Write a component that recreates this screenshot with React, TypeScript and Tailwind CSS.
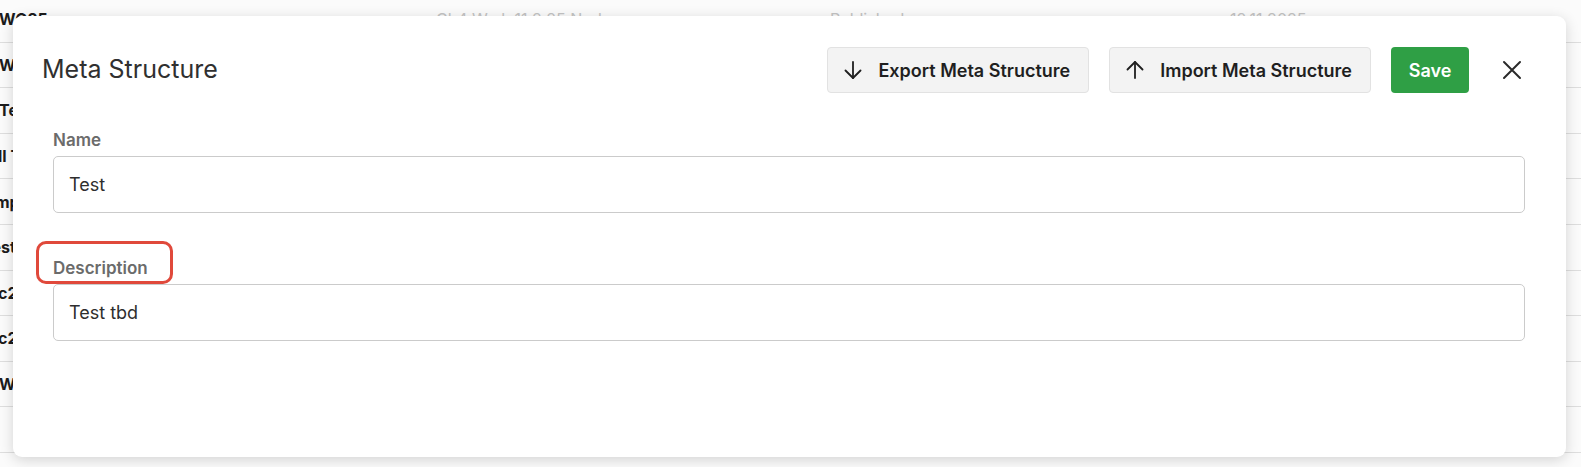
import React from "react";

type Row = { first: string; shift: string; cols: string[] };

const rows: Row[] = [
  { first: "WO25", shift: "ml-[-1px]", cols: ["Ch4 Wmk 11 2 25 Node", "Published", "12.11.2025"] },
  { first: "Wo", shift: "ml-[-1px]", cols: ["", "", ""] },
  { first: "Test", shift: "ml-[-1px]", cols: ["", "", ""] },
  { first: "All Tests", shift: "ml-[-14px]", cols: ["", "", ""] },
  { first: "Temp", shift: "ml-[-24px]", cols: ["", "", ""] },
  { first: "Test", shift: "ml-[-18px]", cols: ["", "", ""] },
  { first: "c2", shift: "ml-[-2px]", cols: ["", "", ""] },
  { first: "c2", shift: "ml-[-2px]", cols: ["", "", ""] },
  { first: "WO", shift: "ml-[-1px]", cols: ["", "", ""] },
  { first: "", shift: "", cols: ["", "", ""] },
];

function ArrowIcon({ up }: { up?: boolean }) {
  return (
    <svg width="18" height="18" viewBox="0 0 18 18" fill="none" stroke="#1f1f1f" strokeWidth="1.8" strokeLinecap="round" strokeLinejoin="round">
      {up ? (
        <>
          <path d="M9 17V1" />
          <path d="M1.5 8.5L9 1l7.5 7.5" />
        </>
      ) : (
        <>
          <path d="M9 1v16" />
          <path d="M1.5 9.5L9 17l7.5-7.5" />
        </>
      )}
    </svg>
  );
}

function Field({ label, value, gap }: { label: string; value: string; gap: string }) {
  return (
    <div className={`flex flex-col ${gap}`}>
      <label className="text-[17px] leading-[24px] font-semibold text-[#6b6b6b] mb-[4px]">{label}</label>
      <div className="h-[57px] border border-[#cbcbcb] rounded-[5px] flex items-center px-[15px] text-[18px] text-[#2e2e2e]">
        {value}
      </div>
    </div>
  );
}

export default function App() {
  return (
    <div
      className="relative w-full h-[467px] overflow-hidden bg-[#fbfbfb]"
      style={{ fontFamily: "Inter, 'Noto Sans', sans-serif" }}
    >
      {/* table behind the dialog */}
      <div className="flex flex-col mt-[-3px]">
        {rows.map((r, i) => (
          <div key={i} className="h-[45.6px] border-b border-[#dedede] flex items-center text-[16px]">
            <div className="w-[436px] overflow-hidden whitespace-nowrap">
              <span className={`inline-block font-bold text-[#1c1c1c] ${r.shift}`}>{r.first}</span>
            </div>
            <div className="w-[394px] text-[#c4c4c4]">{r.cols[0]}</div>
            <div className="w-[400px] text-[#c4c4c4]">{r.cols[1]}</div>
            <div className="text-[#c4c4c4]">{r.cols[2]}</div>
          </div>
        ))}
      </div>

      {/* dialog */}
      <div className="absolute left-[13px] top-[16px] w-[1553px] h-[441px] bg-white rounded-[9px] shadow-[0_3px_14px_rgba(0,0,0,0.16)]">
        <div className="flex items-center pt-[31px] pl-[29px] pr-[44px]">
          <h2 className="text-[25px] font-normal text-[#303030] flex-1">Meta Structure</h2>
          <div className="flex items-center gap-[20px]">
            <button className="h-[46px] flex items-center gap-[16px] pl-[16px] pr-[18px] bg-[#f3f3f3] border border-[#e2e2e2] rounded-[4px] text-[18px] font-semibold text-[#1f1f1f]">
              <ArrowIcon />
              Export Meta Structure
            </button>
            <button className="h-[46px] flex items-center gap-[16px] pl-[16px] pr-[18px] bg-[#f3f3f3] border border-[#e2e2e2] rounded-[4px] text-[18px] font-semibold text-[#1f1f1f]">
              <ArrowIcon up />
              Import Meta Structure
            </button>
            <button className="h-[46px] w-[78px] flex items-center justify-center bg-[#2f9f45] rounded-[4px] text-[18px] font-semibold text-white">
              Save
            </button>
          </div>
          <button className="ml-[33px] w-[20px] h-[20px] flex items-center justify-center">
            <svg width="20" height="20" viewBox="0 0 20 20" fill="none" stroke="#2a2a2a" strokeWidth="2" strokeLinecap="round">
              <path d="M2 2l16 16M18 2L2 18" />
            </svg>
          </button>
        </div>

        <div className="flex flex-col pl-[40px] pr-[41px] pt-[35px]">
          <Field label="Name" value="Test" gap="" />
          <Field label="Description" value="Test tbd" gap="mt-[43px]" />
        </div>

        {/* annotation */}
        <div className="absolute left-[23px] top-[225px] w-[137px] h-[43px] border-[3px] border-[#e0493b] rounded-[10px]" />
      </div>
    </div>
  );
}
